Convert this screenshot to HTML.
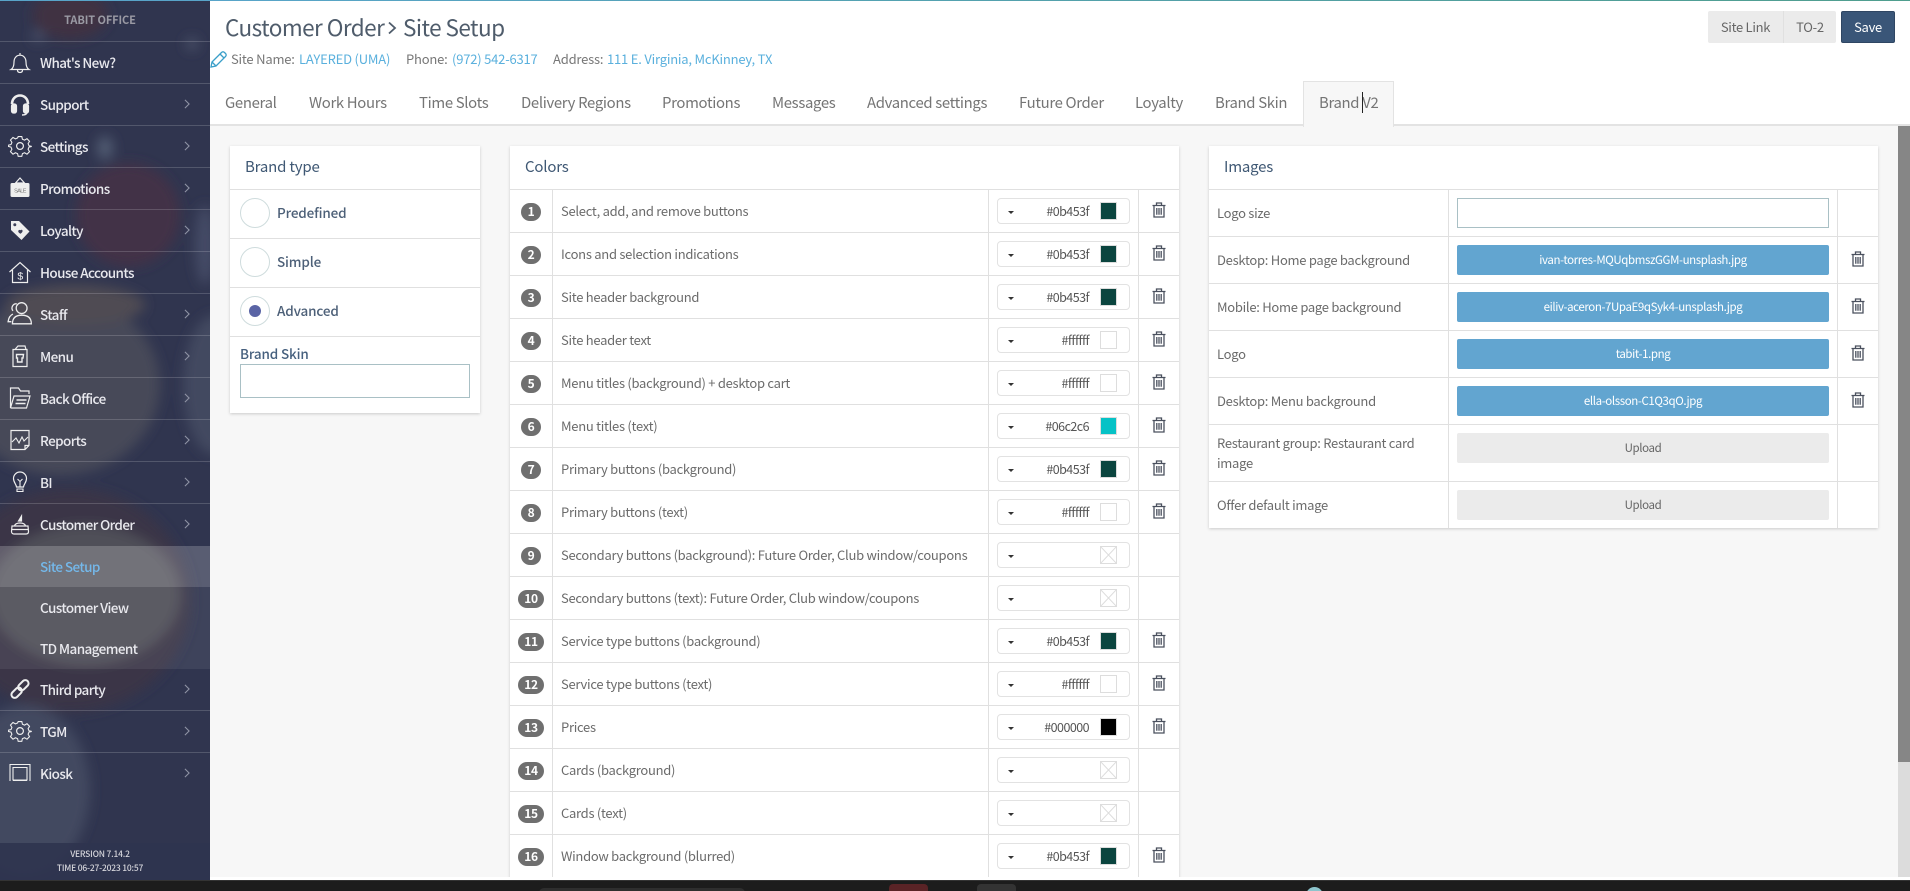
<!DOCTYPE html>
<html lang="en"><head><meta charset="utf-8"><title>Site Setup</title>
<style>
*{box-sizing:border-box}
html,body{margin:0;padding:0;width:1910px;height:891px;overflow:hidden;background:#fff;font-family:"Noto Sans CJK JP","Liberation Sans",sans-serif;font-size:13px;letter-spacing:-.28px;color:#666}
.a{position:absolute;white-space:nowrap}
#side{position:absolute;left:0;top:0;width:210px;height:880px;overflow:hidden;background:#30354f}
#side svg.bg{position:absolute;left:0;top:0}
.it{position:absolute;left:0;width:210px;height:42px;border-bottom:1px solid rgba(255,255,255,.17);color:#e9e9ee;font-size:13.5px;letter-spacing:-.6px;font-weight:500;line-height:40px;padding-left:40px;white-space:nowrap}
.it svg.ic{position:absolute;left:8px;top:8px;width:24px;height:24px;fill:none;stroke:#eee;stroke-width:1.2}
.it svg.ch{position:absolute;left:184px;top:15px;width:6px;height:10px;fill:none;stroke:#8f93a5;stroke-width:1.3}
.sub{border-bottom:0}
#main{position:absolute;left:210px;top:0;width:1700px;height:877px;overflow:hidden;background:#f7f7f7}
#head{position:absolute;left:0;top:0;width:1700px;height:126px;background:#fff;border-bottom:2px solid #e3e3e3}
.tab{position:absolute;top:90px;font-size:14.9px;letter-spacing:-.33px;line-height:26px;color:#757575;white-space:nowrap}
.card{position:absolute;background:#fff;box-shadow:0 1px 3px rgba(0,0,0,.18)}
.ct{position:absolute;font-size:15px;letter-spacing:-.2px;line-height:22px;color:#3f5874;white-space:nowrap}
.r{position:absolute;left:0;width:100%;border-bottom:1px solid #e0e0e0}
.l{position:absolute;left:51px;top:0;line-height:42px;color:#6b6b6b;white-space:nowrap;font-size:13px;letter-spacing:-.28px}
.n{position:absolute;top:13px;height:18px;line-height:18px;border-radius:9px;background:#6f6f6f;color:#fff;font-size:12px;font-weight:700;text-align:center;letter-spacing:-.3px}
.n1{left:11px;width:20px}.n2{left:8px;width:26px}
.p{position:absolute;left:487px;top:8px;width:133px;height:26px;border:1px solid #e2e2e2;border-radius:4px;background:#fff}
.p i{position:absolute;left:10px;top:12px;border:3px solid transparent;border-top:3px solid #333;border-bottom:0}
.p b{position:absolute;right:40px;top:0;line-height:24px;font-weight:400;font-size:12.5px;letter-spacing:-.55px;color:#555}
.p u{position:absolute;left:102px;top:3px;width:17px;height:18px;border:1px solid #ddd;display:block}
.p svg{position:absolute;left:102px;top:3px;width:17px;height:18px}
.t{position:absolute;width:14px;height:16px}
.v{position:absolute;top:44px;width:1px;background:#e0e0e0}
.btn{position:absolute;left:248px;width:372px;height:30px;border-radius:2px;background:#62a5d0;color:#fff;text-align:center;line-height:30px;font-size:11.5px;letter-spacing:-.4px;white-space:nowrap}
.up{background:#ebebeb;color:#666}
.il{position:absolute;left:8px;color:#6b6b6b;font-size:13px;letter-spacing:-.28px;line-height:20px;white-space:nowrap}
.rd{position:absolute;left:10px;width:30px;height:30px;border:1px solid #cfdcdd;border-radius:50%;background:#fff}
.rl{position:absolute;left:47px;color:#4d6078;font-size:13.5px;letter-spacing:-.15px;font-weight:500;line-height:20px;white-space:nowrap}
.hd{letter-spacing:-.55px;font-size:22.5px;line-height:34px;color:#4f5c6b}
.inf{line-height:20px;letter-spacing:-.2px}
</style></head><body>
<svg width="0" height="0" style="position:absolute"><defs>
<symbol id="tr" viewBox="0 0 14 16"><path d="M.5 3.500h13M4.500 3.500V1h5v2.500M2 3.500V15h10V3.500M4.800 6v6.800M7 6v6.800M9.200 6v6.800" fill="none" stroke="#4a505e" stroke-width="1.300"/></symbol>
<symbol id="chv" viewBox="0 0 7 12"><path d="M1 1l5 5-5 5"/></symbol>
<symbol id="gear" viewBox="0 0 24 24"><circle cx="12" cy="12" r="3.400"/><path d="M10 1.500h4l.7 3 2.400 1 2.700-1.600 2.800 2.900-1.600 2.600 1 2.400 3 .7v0l-3 .7-1 2.400 1.600 2.700-2.800 2.800-2.700-1.600-2.400 1-.7 3h-4l-.7-3-2.400-1-2.700 1.600-2.800-2.800 1.600-2.700-1-2.400-3-.7v-1.400l3-.7 1-2.400-1.600-2.600 2.800-2.900 2.700 1.600 2.400-1z" transform="translate(1.200 1.200) scale(.9)"/></symbol>
</defs></svg>

<div id="side">
<svg class="bg" width="210" height="880" viewBox="0 0 210 880"><defs><filter id="b" x="-30%" y="-30%" width="160%" height="160%"><feGaussianBlur stdDeviation="6"/></filter></defs>
<rect width="210" height="880" fill="#30354f"/>
<g filter="url(#b)">
<ellipse cx="70" cy="15" rx="38" ry="24" fill="#3f3043"/>
<ellipse cx="128" cy="215" rx="52" ry="52" fill="#423147"/>
<ellipse cx="105" cy="148" rx="8" ry="12" fill="#515c72"/>
<ellipse cx="192" cy="44" rx="6" ry="6" fill="#4e556c"/>
<ellipse cx="38" cy="36" rx="6" ry="6" fill="#484f68"/>
<ellipse cx="205" cy="245" rx="10" ry="40" fill="#454c66"/>
<ellipse cx="60" cy="385" rx="100" ry="90" fill="#474858"/>
<ellipse cx="75" cy="305" rx="70" ry="20" fill="#4f4c52"/>
<ellipse cx="215" cy="385" rx="32" ry="70" fill="#434860"/>
<ellipse cx="70" cy="600" rx="120" ry="112" fill="#3a3646"/>
<ellipse cx="85" cy="595" rx="95" ry="70" fill="#504f58"/>
<ellipse cx="25" cy="790" rx="65" ry="85" fill="#434960"/>
</g>
<rect y="0" width="210" height="1" fill="#58a4c9"/>
<rect y="546" width="210" height="41" fill="#fff" fill-opacity=".2"/>
<rect y="587" width="210" height="82" fill="#fff" fill-opacity=".07"/>
<rect y="843" width="210" height="37" fill="#2f344f" fill-opacity=".9"/>
</svg>
<div class="a" style="left:0;top:10px;width:200px;text-align:center;font-size:11px;letter-spacing:-.1px;font-weight:700;line-height:20px;color:#9a9aa4">TABIT OFFICE</div>
<div class="a" style="left:0;top:41px;width:210px;height:1px;background:rgba(255,255,255,.17)"></div>

<div class="it" style="top:42px">What's New?<svg class="ic" viewBox="0 0 24 24"><path d="M3 19.500c2.500-1.500 3-4 3-7.500 0-4 2.500-6.800 6-6.800s6 2.800 6 6.800c0 3.500.5 6 3 7.500zM12 5.200V3M9.500 20c0 1.500 1 2.500 2.500 2.500s2.500-1 2.500-2.500"/></svg></div>
<div class="it" style="top:84px">Support<svg class="ic" viewBox="0 0 24 24"><path d="M4 12c0-5 3.500-8.500 8-8.500s8 3.500 8 8.500" stroke-width="2.600"/><rect x="3.500" y="12" width="5" height="9" rx="2" fill="#eee"/><rect x="15.500" y="12" width="5" height="9" rx="2" fill="#eee"/><path d="M19 20c0 2-2 3-5 3" stroke-width="1.500"/></svg><svg class="ch"><use href="#chv"/></svg></div>
<div class="it" style="top:126px">Settings<svg class="ic"><use href="#gear"/></svg><svg class="ch"><use href="#chv"/></svg></div>
<div class="it" style="top:168px">Promotions<svg class="ic" viewBox="0 0 24 24"><path d="M12 2l4.500 5h-9z" /><rect x="2.500" y="7" width="19" height="14" rx="1.500" fill="#eee" stroke="none"/><text x="12" y="16.500" font-size="5.500" text-anchor="middle" fill="#777" stroke="none" font-family="Liberation Sans">SALE</text></svg><svg class="ch"><use href="#chv"/></svg></div>
<div class="it" style="top:210px">Loyalty<svg class="ic" viewBox="0 0 24 24"><path d="M3 3h8l10.500 10.500-8 8.500L3 12z" fill="#eee" stroke="none"/><circle cx="6.800" cy="6.800" r="1.500" fill="#3c3f58" stroke="none"/><path d="M12.500 12.200c1-1 2.500-.2 2 1.300-.3 1-1.200 1.600-2 2.200-.9-.5-1.900-1-2.200-2-.4-1.400 1.200-2.400 2.200-1.500z" fill="#3c3f58" stroke="none"/></svg><svg class="ch"><use href="#chv"/></svg></div>
<div class="it" style="top:252px">House Accounts<svg class="ic" viewBox="0 0 24 24"><path d="M1.500 12L12 2.500 22.500 12M4.500 10v12.500h15V10"/><text x="12" y="19.500" font-size="10.500" text-anchor="middle" fill="#eee" stroke="none" font-family="Liberation Sans">$</text></svg></div>
<div class="it" style="top:294px">Staff<svg class="ic" style="left:7px;width:26px;height:26px;top:6px" viewBox="0 0 24 24"><circle cx="13.500" cy="7.500" r="5"/><path d="M5 22c0-5.500 3-8 8.500-8s9 2.500 9 8zM9 3.500a4 4 0 0 0-3.500 6.500M5.500 13C3 14 1.500 16 1 20h3"/></svg><svg class="ch"><use href="#chv"/></svg></div>
<div class="it" style="top:336px">Menu<svg class="ic" viewBox="0 0 24 24"><path d="M5 5.500h14v17H5zM7 5.500L10 2h7l1 3.500"/><path d="M8.500 10.500h7l-.5 3.500h-1v4h-4.500v-4h-1z" stroke-width="1.400"/></svg><svg class="ch"><use href="#chv"/></svg></div>
<div class="it" style="top:378px">Back Office<svg class="ic" viewBox="0 0 24 24"><path d="M2.500 22V2h8l2 3h8.500v3M2.500 22h16l3.500-12H6l-3.500 12"/><path d="M8.500 14h10M7.500 17.500h10" stroke-width="1.400"/></svg><svg class="ch"><use href="#chv"/></svg></div>
<div class="it" style="top:420px">Reports<svg class="ic" viewBox="0 0 24 24"><path d="M3 2.500h18v15l-4 4H3zM21 17.500h-4v4"/><path d="M4 14l4-4 3 5 3-6 2 4 4-4" stroke-width="1.100"/></svg><svg class="ch"><use href="#chv"/></svg></div>
<div class="it" style="top:462px">BI<svg class="ic" viewBox="0 0 24 24"><path d="M8.500 17c-.3-3-3-4.500-3-8.500a6.500 6.500 0 0 1 13 0c0 4-2.700 5.500-3 8.500z"/><path d="M9.500 9l2.500 2.500L14.500 9M12 11.500V17M9 19h6v2.500H9z" stroke-width="1.100"/></svg><svg class="ch"><use href="#chv"/></svg></div>
<div class="it" style="top:504px;height:42px;border-bottom:0">Customer Order<svg class="ic" viewBox="0 0 24 24"><path d="M4 17.500h16M4 14h16l.5 5.500c0 1.500-1 2.500-2.500 2.500H6c-1.500 0-2.500-1-2.500-2.500zM6.500 14c.5-2 2.500-3 5.500-3s5 1 5.500 3"/><path d="M13.500 4v5h-3z" fill="#eee"/></svg><svg class="ch"><use href="#chv"/></svg></div>
<div class="it sub" style="top:546px;color:#74b8ea">Site Setup</div>
<div class="it sub" style="top:587px">Customer View</div>
<div class="it sub" style="top:628px">TD Management</div>
<div class="it" style="top:669px">Third party<svg class="ic" viewBox="0 0 24 24"><g transform="rotate(-45 12 12)"><rect x="1" y="9" width="12" height="6.500" rx="3.200" stroke-width="2"/><rect x="11" y="8.500" width="12" height="6.500" rx="3.200" stroke-width="2"/></g></svg><svg class="ch"><use href="#chv"/></svg></div>
<div class="it" style="top:711px">TGM<svg class="ic"><use href="#gear"/></svg><svg class="ch"><use href="#chv"/></svg></div>
<div class="it" style="top:753px;border-bottom:0">Kiosk<svg class="ic" viewBox="0 0 24 24"><path d="M2 20V3.500h20V20M5 19V6.500h14V19zM5 19.500h14" stroke-width="1.100"/></svg><svg class="ch"><use href="#chv"/></svg></div>
<div class="a" style="left:0;top:847px;width:200px;text-align:center;font-size:8.500px;letter-spacing:-.2px;font-weight:500;line-height:14px;color:#d4d4da">VERSION 7.14.2<br>TIME 06-27-2023 10:57</div>
</div>

<div id="main">
<div id="head">
<div class="a" style="left:0;top:0;width:1700px;height:1px;background:linear-gradient(90deg,#58a4c9,#4f9e8e)"></div>
<div class="a hd" style="left:15px;top:10px">Customer Order</div>
<svg class="a" style="left:177px;top:21px" width="10" height="14" viewBox="0 0 10 14"><path d="M2 1.500l6 5.500-6 5.500" fill="none" stroke="#4f5c6b" stroke-width="1.800"/></svg>
<div class="a hd" style="left:193px;top:10px">Site Setup</div>
<svg class="a" style="left:0;top:51px" width="17" height="17" viewBox="0 0 17 17"><path d="M1 16l1-5L11.500 1.500a2 2 0 0 1 3 0l1 1a2 2 0 0 1 0 3L6 15zM2 11l4 4M10 3l4 4" fill="none" stroke="#3a9fc9" stroke-width="1.300"/></svg>
<div class="a inf" style="left:21px;top:49px;color:#777">Site Name:</div>
<div class="a inf" style="left:89px;top:49px;color:#5ab0dd">LAYERED (UMA)</div>
<div class="a inf" style="left:196px;top:49px;color:#777">Phone:</div>
<div class="a inf" style="left:242px;top:49px;color:#5ab0dd">(972) 542-6317</div>
<div class="a inf" style="left:343px;top:49px;color:#777">Address:</div>
<div class="a inf" style="left:397px;top:49px;color:#5ab0dd">111 E. Virginia, McKinney, TX</div>
<div class="a" style="left:1498px;top:11px;width:128px;height:32px;background:#ebebeb;border-radius:2px"></div>
<div class="a" style="left:1573px;top:11px;width:1px;height:32px;background:#e0e0e0"></div>
<div class="a" style="left:1498px;top:11px;width:75px;text-align:center;line-height:31px;color:#666">Site Link</div>
<div class="a" style="left:1574px;top:11px;width:52px;text-align:center;line-height:31px;color:#666">TO-2</div>
<div class="a" style="left:1631px;top:11px;width:54px;height:32px;background:#3a5678;border:1px solid #2f4663;border-radius:2px;color:#fff;text-align:center;line-height:29px">Save</div>
<div class="tab" style="left:15px">General</div>
<div class="tab" style="left:99px">Work Hours</div>
<div class="tab" style="left:209px">Time Slots</div>
<div class="tab" style="left:311px">Delivery Regions</div>
<div class="tab" style="left:452px">Promotions</div>
<div class="tab" style="left:562px">Messages</div>
<div class="tab" style="left:657px">Advanced settings</div>
<div class="tab" style="left:809px">Future Order</div>
<div class="tab" style="left:925px">Loyalty</div>
<div class="tab" style="left:1005px">Brand Skin</div>
<div class="a" style="left:1093px;top:81px;width:91px;height:46px;background:#f7f7f7;border:1px solid #e3e3e3;border-bottom:0"></div>
<div class="tab" style="left:1109px">Brand V2</div>
<div class="a" style="left:1152px;top:92px;width:1px;height:21px;background:#222"></div>
</div>

<div class="card" style="left:20px;top:146px;width:250px;height:267px">
<div class="ct" style="left:15px;top:10px">Brand type</div>
<div class="r" style="top:0;height:44px"></div>
<div class="r" style="top:44px;height:49px"><div class="rd" style="top:8px"></div><div class="rl" style="top:12px">Predefined</div></div>
<div class="r" style="top:93px;height:49px"><div class="rd" style="top:8px"></div><div class="rl" style="top:12px">Simple</div></div>
<div class="r" style="top:142px;height:49px"><div class="rd" style="top:8px"><div class="a" style="left:8px;top:8px;width:12px;height:12px;border-radius:50%;background:#5a64a5"></div></div><div class="rl" style="top:12px">Advanced</div></div>
<div class="rl" style="left:10px;top:197px;color:#46607e">Brand Skin</div>
<div class="a" style="left:10px;top:218px;width:230px;height:34px;border:1px solid #a9c0c5;background:#fff"></div>
</div>

<div class="card" style="left:300px;top:146px;width:669px;height:760px">
<div class="ct" style="left:15px;top:10px">Colors</div>
<div class="r" style="top:0;height:44px"></div>
<div class="v" style="left:42px;height:720px"></div>
<div class="v" style="left:478px;height:720px"></div>
<div class="v" style="left:628px;height:720px"></div>

<div class="r" style="top:44px;height:43px"><div class="n n1">1</div><div class="l">Select, add, and remove buttons</div><div class="p"><i></i><b>#0b453f</b><u style="background:#0b453f"></u></div><svg class="t" style="left:642px;top:12px"><use href="#tr"/></svg></div>
<div class="r" style="top:87px;height:43px"><div class="n n1">2</div><div class="l">Icons and selection indications</div><div class="p"><i></i><b>#0b453f</b><u style="background:#0b453f"></u></div><svg class="t" style="left:642px;top:12px"><use href="#tr"/></svg></div>
<div class="r" style="top:130px;height:43px"><div class="n n1">3</div><div class="l">Site header background</div><div class="p"><i></i><b>#0b453f</b><u style="background:#0b453f"></u></div><svg class="t" style="left:642px;top:12px"><use href="#tr"/></svg></div>
<div class="r" style="top:173px;height:43px"><div class="n n1">4</div><div class="l">Site header text</div><div class="p"><i></i><b>#ffffff</b><u style="background:#fff"></u></div><svg class="t" style="left:642px;top:12px"><use href="#tr"/></svg></div>
<div class="r" style="top:216px;height:43px"><div class="n n1">5</div><div class="l">Menu titles (background) + desktop cart</div><div class="p"><i></i><b>#ffffff</b><u style="background:#fff"></u></div><svg class="t" style="left:642px;top:12px"><use href="#tr"/></svg></div>
<div class="r" style="top:259px;height:43px"><div class="n n1">6</div><div class="l">Menu titles (text)</div><div class="p"><i></i><b>#06c2c6</b><u style="background:#06c2c6"></u></div><svg class="t" style="left:642px;top:12px"><use href="#tr"/></svg></div>
<div class="r" style="top:302px;height:43px"><div class="n n1">7</div><div class="l">Primary buttons (background)</div><div class="p"><i></i><b>#0b453f</b><u style="background:#0b453f"></u></div><svg class="t" style="left:642px;top:12px"><use href="#tr"/></svg></div>
<div class="r" style="top:345px;height:43px"><div class="n n1">8</div><div class="l">Primary buttons (text)</div><div class="p"><i></i><b>#ffffff</b><u style="background:#fff"></u></div><svg class="t" style="left:642px;top:12px"><use href="#tr"/></svg></div>
<div class="r" style="top:388px;height:43px"><div class="n n1">9</div><div class="l">Secondary buttons (background): Future Order, Club window/coupons</div><div class="p"><i></i><u></u><svg viewBox="0 0 17 18"><path d="M0 0l17 18M17 0L0 18" stroke="#ddd"/></svg></div></div>
<div class="r" style="top:431px;height:43px"><div class="n n2">10</div><div class="l">Secondary buttons (text): Future Order, Club window/coupons</div><div class="p"><i></i><u></u><svg viewBox="0 0 17 18"><path d="M0 0l17 18M17 0L0 18" stroke="#ddd"/></svg></div></div>
<div class="r" style="top:474px;height:43px"><div class="n n2">11</div><div class="l">Service type buttons (background)</div><div class="p"><i></i><b>#0b453f</b><u style="background:#0b453f"></u></div><svg class="t" style="left:642px;top:12px"><use href="#tr"/></svg></div>
<div class="r" style="top:517px;height:43px"><div class="n n2">12</div><div class="l">Service type buttons (text)</div><div class="p"><i></i><b>#ffffff</b><u style="background:#fff"></u></div><svg class="t" style="left:642px;top:12px"><use href="#tr"/></svg></div>
<div class="r" style="top:560px;height:43px"><div class="n n2">13</div><div class="l">Prices</div><div class="p"><i></i><b>#000000</b><u style="background:#000"></u></div><svg class="t" style="left:642px;top:12px"><use href="#tr"/></svg></div>
<div class="r" style="top:603px;height:43px"><div class="n n2">14</div><div class="l">Cards (background)</div><div class="p"><i></i><u></u><svg viewBox="0 0 17 18"><path d="M0 0l17 18M17 0L0 18" stroke="#ddd"/></svg></div></div>
<div class="r" style="top:646px;height:43px"><div class="n n2">15</div><div class="l">Cards (text)</div><div class="p"><i></i><u></u><svg viewBox="0 0 17 18"><path d="M0 0l17 18M17 0L0 18" stroke="#ddd"/></svg></div></div>
<div class="r" style="top:689px;height:43px"><div class="n n2">16</div><div class="l">Window background (blurred)</div><div class="p"><i></i><b>#0b453f</b><u style="background:#0b453f"></u></div><svg class="t" style="left:642px;top:12px"><use href="#tr"/></svg></div>
</div>

<div class="card" style="left:999px;top:146px;width:669px;height:382px">
<div class="ct" style="left:15px;top:10px">Images</div>
<div class="r" style="top:0;height:44px"></div>
<div class="v" style="left:239px;height:338px"></div>
<div class="v" style="left:628px;height:338px"></div>
<div class="r" style="top:44px;height:47px"><div class="il" style="top:13px">Logo size</div><div class="a" style="left:248px;top:8px;width:372px;height:30px;border:1px solid #a9c0c5"></div></div>
<div class="r" style="top:91px;height:47px"><div class="il" style="top:13px">Desktop: Home page background</div><div class="btn" style="top:8px">ivan-torres-MQUqbmszGGM-unsplash.jpg</div><svg class="t" style="left:642px;top:14px"><use href="#tr"/></svg></div>
<div class="r" style="top:138px;height:47px"><div class="il" style="top:13px">Mobile: Home page background</div><div class="btn" style="top:8px">eiliv-aceron-7UpaE9qSyk4-unsplash.jpg</div><svg class="t" style="left:642px;top:14px"><use href="#tr"/></svg></div>
<div class="r" style="top:185px;height:47px"><div class="il" style="top:13px">Logo</div><div class="btn" style="top:8px">tabit-1.png</div><svg class="t" style="left:642px;top:14px"><use href="#tr"/></svg></div>
<div class="r" style="top:232px;height:47px"><div class="il" style="top:13px">Desktop: Menu background</div><div class="btn" style="top:8px">ella-olsson-C1Q3qO.jpg</div><svg class="t" style="left:642px;top:14px"><use href="#tr"/></svg></div>
<div class="r" style="top:279px;height:57px"><div class="il" style="top:8px">Restaurant group: Restaurant card<br>image</div><div class="btn up" style="top:8px">Upload</div></div>
<div class="r" style="top:336px;height:46px;border-bottom:0"><div class="il" style="top:13px">Offer default image</div><div class="btn up" style="top:8px">Upload</div></div>
</div>

<div class="a" style="left:1688px;top:126px;width:12px;height:751px;background:#dcdcdc"></div>
<div class="a" style="left:1688px;top:126px;width:12px;height:636px;background:#868686"></div>
</div>

<div class="a" style="left:0;top:880px;width:1910px;height:11px;background:#1c1c1c;border-top:1px solid #333;overflow:hidden">
<div class="a" style="left:539px;top:7px;width:206px;height:10px;background:#2e2e2e;border-radius:6px"></div>
<div class="a" style="left:889px;top:3px;width:39px;height:12px;background:#5a2326;border-radius:4px"></div>
<div class="a" style="left:977px;top:3px;width:39px;height:12px;background:#333;border-radius:4px"></div>
<div class="a" style="left:1306px;top:6px;width:17px;height:17px;background:#8cc4cc;border-radius:50%"></div>
</div>
</body></html>
